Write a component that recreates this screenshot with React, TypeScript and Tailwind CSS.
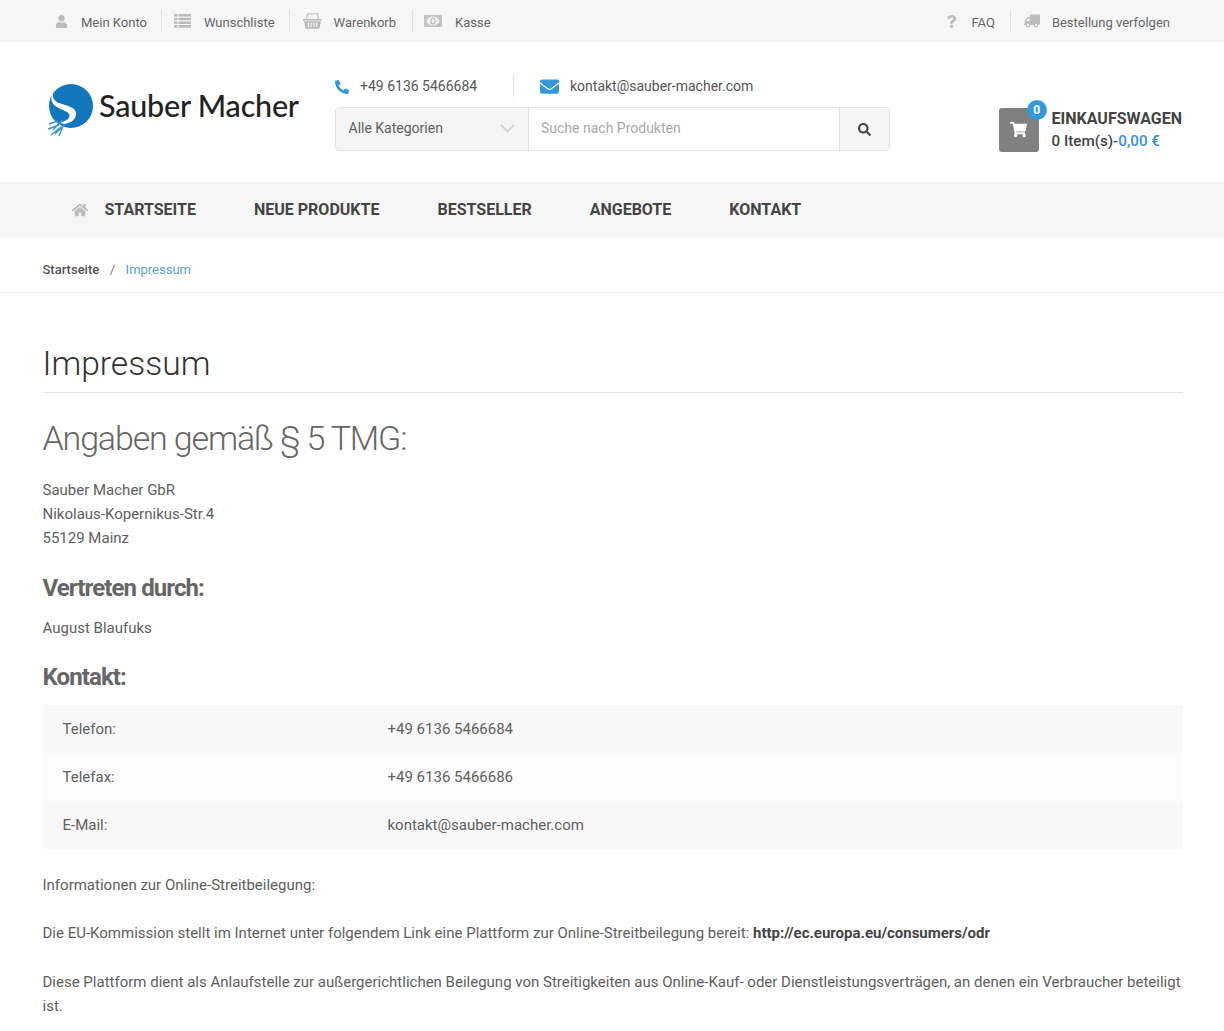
import { FaUser, FaTruck, FaPhoneAlt, FaEnvelope, FaHome, FaShoppingCart, FaSearch, FaQuestion } from "react-icons/fa";

function ListIcon() {
  return (
    <svg width="17" height="14" viewBox="0 0 17 14" fill="#bcbcbc">
      <path d="M0 0h3.5v2.6H0zM4.5 0H17v2.6H4.5zM0 3.7h3.5v2.6H0zM4.5 3.7H17v2.6H4.5zM0 7.4h3.5V10H0zM4.5 7.4H17V10H4.5zM0 11.1h3.5v2.6H0zM4.5 11.1H17v2.6H4.5z" />
    </svg>
  );
}

function BasketIcon() {
  return (
    <svg width="19" height="16" viewBox="0 0 19 16" fill="#bcbcbc">
      <path d="M3.5 6 L4.5 1.5 Q4.7 .7 5.5 .7 H13.5 Q14.3 .7 14.5 1.5 L15.5 6" fill="none" stroke="#bcbcbc" strokeWidth="1.1" />
      <path d="M0 6h19v1.6H0z" />
      <path fillRule="evenodd" d="M1.2 8.2h16.6L16.6 15q-.1.8-1 .8H3.4q-.9 0-1-.8z M4.8 9.5v4.5h1.1V9.5z M7.6 9.5v4.5h1.1V9.5z M10.4 9.5v4.5h1.1V9.5z M13.2 9.5v4.5h1.1V9.5z" />
    </svg>
  );
}

function MoneyIcon() {
  return (
    <svg width="18" height="12" viewBox="0 0 18 12">
      <rect width="18" height="12" rx="1" fill="#c4c4c4" />
      <ellipse cx="9" cy="6" rx="6.4" ry="4.4" fill="#f1f1f1" />
      <ellipse cx="9" cy="6" rx="2" ry="3" fill="none" stroke="#b5b5b5" strokeWidth="1.1" />
    </svg>
  );
}

function Logo() {
  return (
    <div className="flex items-start ml-[4px] h-[56px]">
      <svg width="48" height="56" viewBox="0 0 48 56" className="shrink-0">
        <circle cx="24" cy="23" r="22" fill="#1276bd" />
        <path d="M13 1 C4 7 3 16 12 20 C20 23 30 24 29 32 C28 38 22 40 18 41 L13 40 C20 37 24 35 22 31 C20 27 8 26 5 19 C3 12 6 5 13 1 Z" fill="#fff" />
        <path d="M15 37 L6 47 M11 38 L2 41 M12 42 L1 46 M14 44 L4 52 M16 43 L12 53 M18 41 L8 51" stroke="#3d94d1" strokeWidth="1.5" fill="none" />
      </svg>
      <span className="ml-[4px] mt-[4px] whitespace-nowrap font-['Lato',sans-serif] text-[30.5px] font-medium leading-[36px] text-[#222] tracking-[-0.2px]">
        Sauber Macher
      </span>
    </div>
  );
}

const leftLinks = [
  { label: "Mein Konto", icon: <FaUser className="text-[13px]" />, pad: "pr-[14px]", gap: "gap-[13px]" },
  { label: "Wunschliste", icon: <ListIcon />, pad: "pl-[12px] pr-[14px]", gap: "gap-[13px]" },
  { label: "Warenkorb", icon: <BasketIcon />, pad: "pl-[13px] pr-[16px]", gap: "gap-[12px]" },
  { label: "Kasse", icon: <MoneyIcon />, pad: "pl-[11px]", gap: "gap-[13px]" },
];

const navItems = ["NEUE PRODUKTE", "BESTSELLER", "ANGEBOTE", "KONTAKT"];

const contact = [
  { label: "Telefon:", value: "+49 6136 5466684", bg: "bg-[#f8f8f8]" },
  { label: "Telefax:", value: "+49 6136 5466686", bg: "bg-[#fcfcfc]" },
  { label: "E-Mail:", value: "kontakt@sauber-macher.com", bg: "bg-[#f8f8f8]" },
];

export default function App() {
  return (
    <div className="min-h-screen bg-white font-['Roboto',sans-serif] text-[15px] text-[#606060]">
      {/* Top bar */}
      <div className="h-[42px] bg-[#f6f6f6] flex items-center justify-between pl-[55px] pr-[54px] text-[13px] text-[#666]">
        <div className="flex items-center">
          {leftLinks.map((l, i) => (
            <div key={l.label} className={`flex items-center h-[22px] ${l.gap} ${l.pad} ${i < 3 ? "border-r border-[#e2e2e2]" : ""}`}>
              <span className="text-[#bcbcbc]">{l.icon}</span>
              <span className="mt-[3px]">{l.label}</span>
            </div>
          ))}
        </div>
        <div className="flex items-center">
          <div className="flex items-center h-[22px] gap-[13px] pr-[15px] border-r border-[#e2e2e2]">
            <FaQuestion className="text-[13px] text-[#bcbcbc]" />
            <span className="mt-[3px]">FAQ</span>
          </div>
          <div className="flex items-center h-[22px] gap-[12px] pl-[13px]">
            <FaTruck className="text-[16px] text-[#bcbcbc] -scale-x-100" />
            <span className="mt-[3px]">Bestellung verfolgen</span>
          </div>
        </div>
      </div>

      {/* Header */}
      <div className="h-[140px] flex pl-[43px] pr-[42px]">
        <div className="w-[292px] pt-[41px]">
          <Logo />
        </div>
        <div className="w-[555px] pt-[34px]">
          <div className="flex items-center h-[21px] text-[14px] text-[#555]">
            <div className="flex items-center w-[179px] h-[21px] border-r border-[#e2e2e2]">
              <FaPhoneAlt className="text-[14px] text-[#3498db]" />
              <span className="ml-[11px]">+49 6136 5466684</span>
            </div>
            <FaEnvelope className="ml-[26px] text-[19px] text-[#3498db]" />
            <span className="ml-[11px]">kontakt@sauber-macher.com</span>
          </div>
          <div className="mt-[10px] flex h-[44px] border border-[#e1e1e1] rounded-[4px] text-[14px] overflow-hidden">
            <div className="w-[193px] flex items-center justify-between bg-[#f5f5f5] border-r border-[#e1e1e1] pl-[12.5px] pr-[13px] pb-[1px]">
              <span>Alle Kategorien</span>
              <svg width="15" height="9" viewBox="0 0 15 9" fill="none" stroke="#d4d4d4" strokeWidth="1.8">
                <path d="M1 1l6.5 6.5L14 1" />
              </svg>
            </div>
            <div className="flex-1 flex items-center pl-[12px] pb-[1px] text-[#a9a9a9]">Suche nach Produkten</div>
            <div className="w-[50px] flex items-center justify-center bg-[#f5f5f5] border-l border-[#e1e1e1]">
              <FaSearch className="text-[13px] text-[#444]" />
            </div>
          </div>
        </div>
        <div className="ml-auto flex items-start pt-[66px]">
          <div className="relative w-[40px] h-[44px] bg-[#808080] rounded-[3px] flex items-center justify-center">
            <FaShoppingCart className="text-[17px] text-white mt-[-2px]" />
            <span className="absolute -top-[8px] -right-[8px] w-[20px] h-[20px] rounded-full bg-[#3498db] text-white text-[12px] font-bold flex items-center justify-center">0</span>
          </div>
          <div className="ml-[13px]">
            <div className="text-[16px] font-bold leading-[22px] text-[#444]">EINKAUFSWAGEN</div>
            <div className="text-[15.2px] font-medium leading-[23px] text-[#444]">
              0 Item(s)-<span className="text-[#3b8fd8]">0,00 €</span>
            </div>
          </div>
        </div>
      </div>

      {/* Nav */}
      <div className="h-[56px] bg-[#f6f6f6] flex items-center pl-[72px] text-[16px] font-bold text-[#444]">
        <FaHome className="text-[16px] text-[#bcbcbc]" />
        <span className="ml-[16.5px]">STARTSEITE</span>
        {navItems.map((n) => (
          <span key={n} className="ml-[58px]">{n}</span>
        ))}
      </div>

      {/* Breadcrumb */}
      <div className="h-[55px] border-b border-[#eee] flex items-center pl-[42.5px] pt-[9px] text-[13px]">
        <span className="font-medium text-[#555]">Startseite</span>
        <span className="mx-[10.5px] text-[#777]">/</span>
        <span className="text-[#5a9fd8]">Impressum</span>
      </div>

      {/* Content */}
      <div className="pl-[42.5px] pr-[41.5px]">
        <h1 className="mt-[49px] pb-[6px] text-[33.6px] leading-[44px] font-light text-[#333] border-b border-[#e3e3e3]">Impressum</h1>
        <h2 className="mt-[20px] text-[34px] leading-[50px] font-light tracking-[-1.15px] text-[#666]">Angaben gemäß § 5 TMG:</h2>
        <p className="mt-[15px] leading-[24px]">
          Sauber Macher GbR<br />
          Nikolaus-Kopernikus-Str.4<br />
          55129 Mainz
        </p>
        <h3 className="mt-[22px] text-[24px] leading-[32px] font-bold tracking-[-0.9px] text-[#666]">Vertreten durch:</h3>
        <p className="mt-[12px] leading-[24px]">August Blaufuks</p>
        <h3 className="mt-[21px] text-[24px] leading-[32px] font-bold tracking-[-0.9px] text-[#666]">Kontakt:</h3>
        <div className="mt-[12px]">
          {contact.map((c) => (
            <div key={c.label} className={`h-[48px] flex items-center pl-[20px] ${c.bg}`}>
              <span className="w-[325px]">{c.label}</span>
              <span>{c.value}</span>
            </div>
          ))}
        </div>
        <p className="mt-[24px] leading-[24px]">Informationen zur Online-Streitbeilegung:</p>
        <p className="mt-[24px] leading-[24px]">
          Die EU-Kommission stellt im Internet unter folgendem Link eine Plattform zur Online-Streitbeilegung bereit: <b className="font-bold text-[#444]">http://ec.europa.eu/consumers/odr</b>
        </p>
        <p className="mt-[25px] leading-[24px]">
          Diese Plattform dient als Anlaufstelle zur außergerichtlichen Beilegung von Streitigkeiten aus Online-Kauf- oder Dienstleistungsverträgen, an denen ein Verbraucher beteiligt ist.
        </p>
      </div>
    </div>
  );
}
